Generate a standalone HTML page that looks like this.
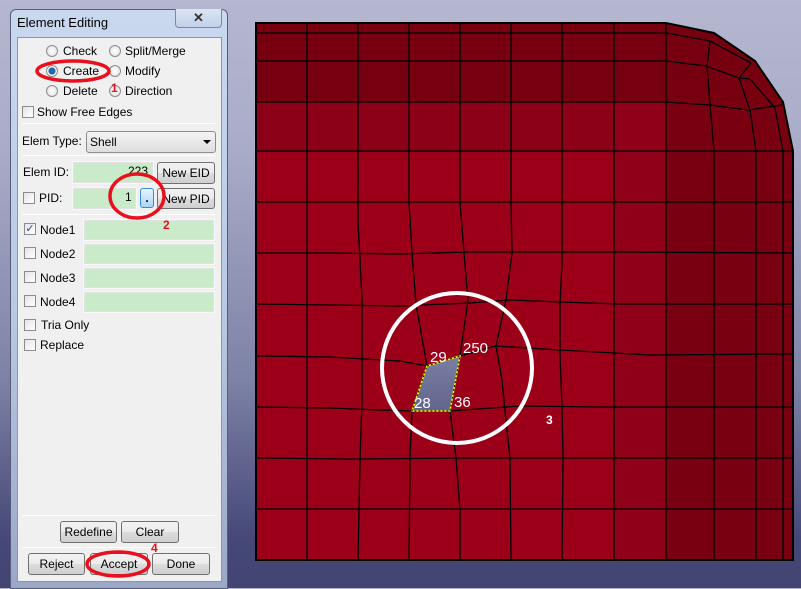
<!DOCTYPE html>
<html><head><style>
*{margin:0;padding:0;box-sizing:border-box}
body{width:801px;height:588px;overflow:hidden;position:relative;font-family:"Liberation Sans",sans-serif;font-size:12px;color:#000;background:linear-gradient(#b5b7d0 0px,#a9acc8 150px,#7d82a6 380px,#454877 540px,#424572 588px)}
.a{position:absolute}
.frame{left:10px;top:9px;width:218px;height:580px;border:1px solid #555d78;border-radius:6px 6px 0 0;background:linear-gradient(#c9d8ef,#b9c9e3 300px,#9aa6c6 588px)}
.panel{left:17px;top:37px;width:205px;height:545px;background:#f0f0f0;border:1px solid #8a97ad}
.sep{position:absolute;left:22px;width:193px;height:1px;background:#a0a0a0;border-bottom:1px solid #fff}
.rad{position:absolute;width:12px;height:12px;border-radius:50%;border:1px solid #8c8c8c;background:radial-gradient(circle,#fff,#ddd)}
.chk{position:absolute;width:12px;height:12px;border:1px solid #8c8c8c;background:linear-gradient(135deg,#e4e4e4,#fff)}
.t{position:absolute;font-size:12px;line-height:14px;white-space:nowrap}
.btn{position:absolute;height:22px;border:1px solid #707070;border-radius:3px;background:linear-gradient(#f2f2f2 0%,#ebebeb 50%,#dddddd 51%,#cfcfcf 100%);text-align:center;line-height:20px;font-size:12px}
.fld{position:absolute;background:#c9ebc9;border:1px solid #e2e2e2;outline:1px solid #f8f8f8}
</style></head><body>
<svg class="a" style="left:0;top:0" width="801" height="588">
<defs><linearGradient id="q" x1="0" y1="0" x2="0" y2="1"><stop offset="0" stop-color="#7a7ea4"/><stop offset="1" stop-color="#62668e"/></linearGradient></defs>
<path d="M256 23H666L714 33L755 61L783 102L793 151V560H256Z" fill="#9b0018"/>
<rect x="256" y="102" width="358" height="49" fill="#8c0018"/>
<rect x="614" y="102" width="52" height="458" fill="#900018"/>
<path d="M666 102L783 102L793 151V560H666Z" fill="#780010"/>
<path d="M256 23H666L714 33L755 61L783 102H256Z" fill="#760010"/>
<g stroke="#000" stroke-width="1.3" fill="none">
<path d="M256 23H666L714 33L755 61L783 102L793 151V560H256Z" stroke-width="2"/>
<path d="M256 33H666L710 41L751 63"/>
<path d="M256 61H666L706 66L739 78L750 79"/>
<path d="M256 102H666L710 105L748 110L782 105"/>
<path d="M256 151H793"/><path d="M256 202H793"/><path d="M256 253H330L400 254L470 252L540 252L610 252L793 253"/>
<path d="M256 304L330 305L400 306L470 303L510 300L560 302L620 304L793 304"/>
<path d="M256 356L330 357L400 361L427 366L460 356L495 346L560 350L650 355L793 354"/>
<path d="M256 407L330 408L380 410L412 411L450 411L520 406L600 407L793 407"/>
<path d="M256 458L350 459L470 458L560 458L793 458"/><path d="M256 509H793"/>
<path d="M307 23V560"/>
<path d="M358 23V223L360 260L362 300L362 400L360 460L358 560"/>
<path d="M409 23V202L412 253L416 304L427 366L412 411L410 458L409 560"/>
<path d="M460 23V202L464 253L468 300L460 356L450 411L456 458L460 509L460 560"/>
<path d="M511 23V202L512 253L506 300L496 346L502 380L505 411L510 458L511 560"/>
<path d="M562 23V262L560 304L560 355L562 407L563 458L562 560"/>
<path d="M614 23V560"/><path d="M666 23V560"/>
<path d="M710 41L707 66L710 105L714 151V560"/><path d="M751 63L739 78L750 110L756 151V560"/><path d="M750 79L775 108L783 151V560"/>
</g>
<path d="M427 366L460 356L450 411L412 411Z" fill="url(#q)" stroke="#ff0" stroke-width="1.5"/>
<path d="M427 366L460 356L450 411L412 411Z" fill="none" stroke="#000" stroke-width="1" stroke-dasharray="2 2"/>
<circle cx="457" cy="368" r="75" fill="none" stroke="#fff" stroke-width="4"/>
<g fill="#fff" font-family="Liberation Sans,sans-serif" font-size="15">
<text x="430" y="362">29</text><text x="463" y="353">250</text><text x="414" y="408">28</text><text x="454" y="407">36</text>
<text x="546" y="424" font-size="12" font-weight="bold">3</text></g>
</svg>

<div class="a frame"></div>
<div class="t" style="left:17px;top:16px;font-size:13px">Element Editing</div>
<div class="a" style="left:175px;top:9px;width:47px;height:19px;border:1px solid #7c88a4;border-top:none;border-radius:0 0 4px 4px;background:linear-gradient(#dbe5f5,#c2d0e8);text-align:center;font-weight:bold;font-size:13px;line-height:17px;color:#333">✕</div>
<div class="a panel"></div>

<div class="rad" style="left:46px;top:45px"></div><div class="t" style="left:63px;top:44px">Check</div>
<div class="rad" style="left:109px;top:45px"></div><div class="t" style="left:125px;top:44px">Split/Merge</div>
<div class="rad" style="left:46px;top:65px;background:radial-gradient(circle,#2a78c8 0,#1c5da3 3px,#fff 4px,#ddd 6px)"></div><div class="t" style="left:63px;top:64px">Create</div>
<div class="rad" style="left:109px;top:65px"></div><div class="t" style="left:125px;top:64px">Modify</div>
<div class="rad" style="left:46px;top:85px"></div><div class="t" style="left:63px;top:84px">Delete</div>
<div class="rad" style="left:109px;top:85px"></div><div class="t" style="left:125px;top:84px">Direction</div>
<div class="chk" style="left:22px;top:106px"></div><div class="t" style="left:37px;top:105px">Show Free Edges</div>
<div class="sep" style="top:123px"></div>
<div class="t" style="left:22px;top:134px">Elem Type:</div>
<div class="a" style="left:86px;top:131px;width:130px;height:22px;border:1px solid #8c8c8c;border-radius:3px;background:linear-gradient(#f4f4f4,#dedede)"></div>
<div class="t" style="left:90px;top:135px">Shell</div>
<div class="a" style="left:203px;top:140px;width:0;height:0;border-left:4px solid transparent;border-right:4px solid transparent;border-top:4px solid #000"></div>
<div class="sep" style="top:155px"></div>
<div class="t" style="left:23px;top:165px">Elem ID:</div>
<div class="fld" style="left:73px;top:162px;width:80px;height:21px"></div><div class="t" style="left:128px;top:164px">223</div>
<div class="btn" style="left:157px;top:162px;width:58px">New EID</div>
<div class="chk" style="left:23px;top:192px"></div><div class="t" style="left:39px;top:191px">PID:</div>
<div class="fld" style="left:73px;top:188px;width:63px;height:21px"></div><div class="t" style="left:125px;top:190px">1</div>
<div class="a" style="left:140px;top:188px;width:14px;height:20px;border:1px solid #3a8ad8;border-radius:3px;background:linear-gradient(#e6f4ff,#a9d6f7);text-align:center;line-height:18px;font-weight:bold">.</div>
<div class="btn" style="left:157px;top:188px;width:58px;height:21px">New PID</div>
<div class="sep" style="top:214px"></div>
<div class="chk" style="left:24px;top:223px;color:#2c4a8c;font-size:11px;line-height:10px;text-align:center">✓</div><div class="t" style="left:40px;top:223px">Node1</div><div class="fld" style="left:84px;top:220px;width:130px;height:20px"></div>
<div class="chk" style="left:24px;top:247px"></div><div class="t" style="left:40px;top:247px">Node2</div><div class="fld" style="left:84px;top:244px;width:130px;height:20px"></div>
<div class="chk" style="left:24px;top:271px"></div><div class="t" style="left:40px;top:271px">Node3</div><div class="fld" style="left:84px;top:268px;width:130px;height:20px"></div>
<div class="chk" style="left:24px;top:295px"></div><div class="t" style="left:40px;top:295px">Node4</div><div class="fld" style="left:84px;top:292px;width:130px;height:20px"></div>
<div class="chk" style="left:24px;top:319px"></div><div class="t" style="left:41px;top:318px">Tria Only</div>
<div class="chk" style="left:24px;top:339px"></div><div class="t" style="left:40px;top:338px">Replace</div>
<div class="sep" style="top:515px"></div>
<div class="btn" style="left:60px;top:521px;width:57px">Redefine</div>
<div class="btn" style="left:121px;top:521px;width:58px">Clear</div>
<div class="sep" style="top:547px"></div>
<div class="btn" style="left:28px;top:553px;width:57px">Reject</div>
<div class="btn" style="left:90px;top:553px;width:58px">Accept</div>
<div class="btn" style="left:152px;top:553px;width:58px">Done</div>

<svg class="a" style="left:0;top:0" width="801" height="588">
<g fill="none" stroke="#e8101c" stroke-width="3.5">
<ellipse cx="73" cy="71" rx="36" ry="10"/>
<ellipse cx="137" cy="196" rx="27" ry="22"/>
<ellipse cx="118" cy="564" rx="31" ry="12"/>
</g>
<g fill="#e8101c" font-family="Liberation Sans,sans-serif" font-weight="bold" font-size="12">
<text x="111" y="92">1</text><text x="163" y="229">2</text><text x="151" y="552">4</text></g>
</svg>
</body></html>
